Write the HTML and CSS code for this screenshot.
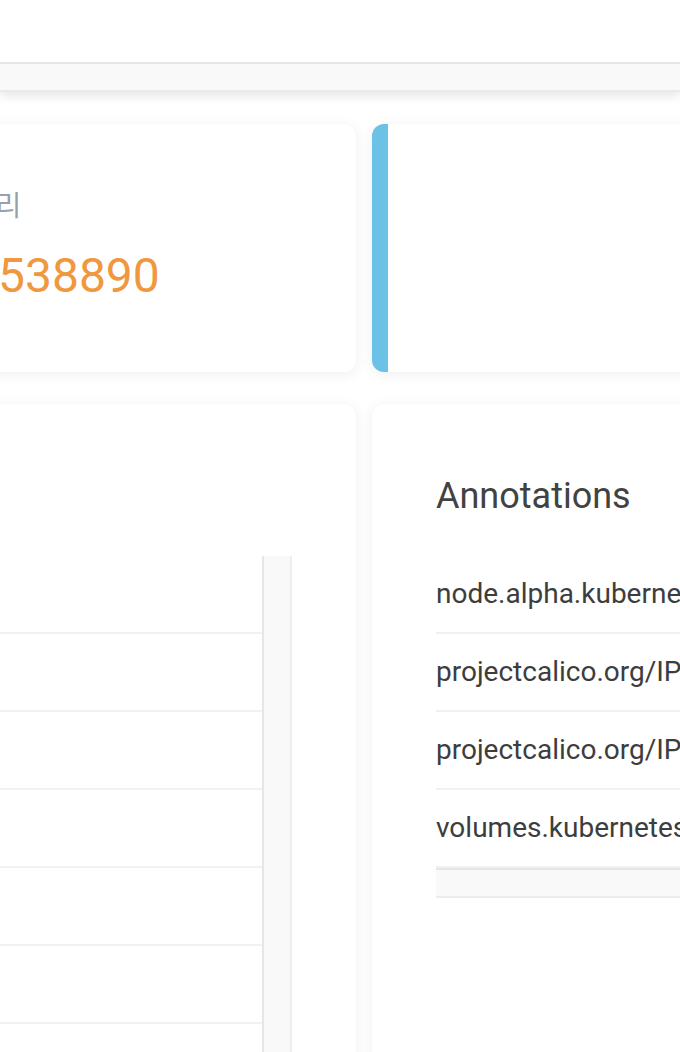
FILE: index.html
```html
<!DOCTYPE html>
<html lang="ko">
<head>
<meta charset="utf-8">
<title>Node detail</title>
<link rel="stylesheet" href="styles.css">
</head>
<body>
<header class="topbar">
  <div class="topbar-main"></div>
  <div class="hscroll"></div>
</header>
<main class="content">
  <div class="grid">
    <section class="card stat">
      <div class="stat-label">메모리</div>
      <div class="stat-value">16538890</div>
    </section>
    <section class="card stat accent"></section>
    <section class="card panel">
      <div class="panel-title">&nbsp;</div>
      <div class="vscroll-wrap">
        <div class="table">
          <div class="row"></div>
          <div class="row"></div>
          <div class="row"></div>
          <div class="row"></div>
          <div class="row"></div>
          <div class="row"></div>
          <div class="row"></div>
        </div>
        <div class="vscroll"></div>
      </div>
    </section>
    <section class="card panel">
      <h2 class="panel-title">Annotations</h2>
      <div class="table">
        <div class="row">node.alpha.kubernetes.io/ttl</div>
        <div class="row">projectcalico.org/IPv4Address</div>
        <div class="row">projectcalico.org/IPv4IPIPTunnelAddr</div>
        <div class="row">volumes.kubernetes.io/controller-managed-attach-detach</div>
      </div>
      <div class="hscroll-small"></div>
    </section>
  </div>
</main>
</body>
</html>
```
FILE: styles.css
```css
html, body {
  margin: 0;
  padding: 0;
  background: #ffffff;
  overflow: hidden;
  height: 100%;
}
body {
  font-family: Roboto, "Noto Sans CJK KR", sans-serif;
  color: #3d3d3d;
}
.topbar {
  position: relative;
  z-index: 2;
  background: #ffffff;
  box-shadow: 0 4px 10px rgba(0, 0, 0, 0.1);
}
.topbar-main {
  height: 62px;
}
.hscroll {
  height: 26px;
  background: #f9f9f9;
  border-top: 2px solid #e6e6e6;
  border-bottom: 2px solid #ebebeb;
}
.content {
  padding-top: 32px;
  margin-left: -120px;
}
.grid {
  display: grid;
  grid-template-columns: 476px 476px;
  column-gap: 16px;
  row-gap: 32px;
}
.card {
  background: #ffffff;
  border-radius: 12px;
  box-shadow: 0 2px 14px rgba(0, 0, 0, 0.07);
  box-sizing: border-box;
  padding: 64px;
}
.stat {
  min-height: 248px;
}
.accent {
  border-left: 16px solid #6cc2e6;
}
.stat-label {
  font-family: "Noto Sans CJK KR", sans-serif;
  font-size: 28px;
  line-height: 32px;
  color: #9aa0aa;
}
.stat-value {
  margin-top: 28px;
  font-size: 48px;
  line-height: 56px;
  color: #f0983f;
}
.panel {
  min-height: 800px;
}
.panel-title {
  margin: 0 0 32px;
  font-size: 36px;
  line-height: 56px;
  font-weight: 400;
  color: #424242;
}
.vscroll-wrap {
  display: flex;
}
.table {
  flex: 1;
  min-width: 0;
}
.row {
  height: 76px;
  line-height: 76px;
  border-bottom: 2px solid #f1f1f1;
  font-size: 28px;
  white-space: nowrap;
  overflow: hidden;
  color: #3d3d3d;
}
.vscroll {
  width: 26px;
  background: #f9f9f9;
  border-left: 2px solid #e6e6e6;
  border-right: 2px solid #eeeeee;
}
.hscroll-small {
  height: 26px;
  background: #f9f9f9;
  border-top: 2px solid #e6e6e6;
  border-bottom: 2px solid #ececec;
}
```
